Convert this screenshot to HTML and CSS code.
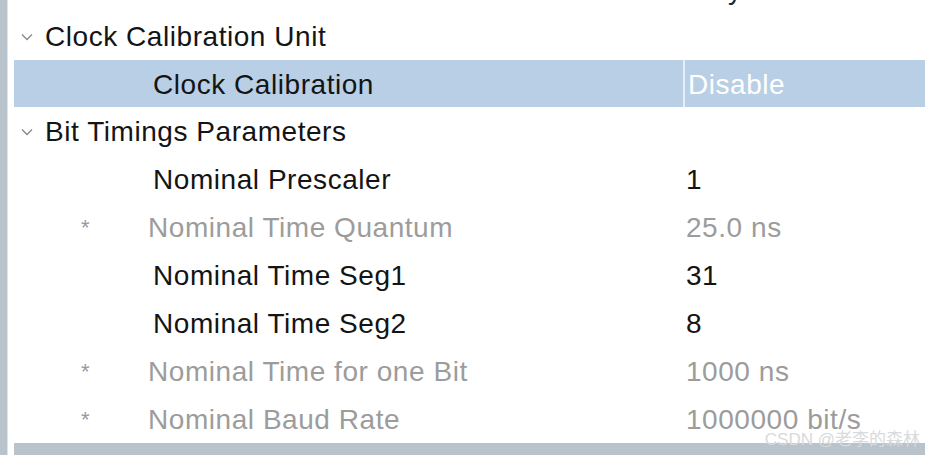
FILE: index.html
```html
<!DOCTYPE html>
<html>
<head>
<meta charset="utf-8">
<link rel="stylesheet" href="styles.css">
</head>
<body>
<div class="frame">
  <div class="sidebar"></div>
  <div class="panel">
    <div class="top-partial"><span class="ghost">y</span></div>
    <div class="row group"><span class="chev"><svg width="14" height="10" viewBox="0 0 14 10"><path d="M2 2.5 L7 7.5 L12 2.5" fill="none" stroke="#8a8a8a" stroke-width="1.4"/></svg></span><span class="gtitle">Clock Calibration Unit</span></div>
    <div class="row prop selected"><span class="star"></span><span class="label">Clock Calibration</span><span class="value">Disable</span></div>
    <div class="row group"><span class="chev"><svg width="14" height="10" viewBox="0 0 14 10"><path d="M2 2.5 L7 7.5 L12 2.5" fill="none" stroke="#8a8a8a" stroke-width="1.4"/></svg></span><span class="gtitle">Bit Timings Parameters</span></div>
    <div class="row prop"><span class="star"></span><span class="label">Nominal Prescaler</span><span class="value">1</span></div>
    <div class="row prop ro"><span class="star">*</span><span class="label">Nominal Time Quantum</span><span class="value">25.0 ns</span></div>
    <div class="row prop"><span class="star"></span><span class="label">Nominal Time Seg1</span><span class="value">31</span></div>
    <div class="row prop"><span class="star"></span><span class="label">Nominal Time Seg2</span><span class="value">8</span></div>
    <div class="row prop ro"><span class="star">*</span><span class="label">Nominal Time for one Bit</span><span class="value">1000 ns</span></div>
    <div class="row prop ro"><span class="star">*</span><span class="label">Nominal Baud Rate</span><span class="value">1000000 bit/s</span></div>
    <div class="bottom-bar"></div>
  </div>
  <div class="watermark">CSDN @老李的森林</div>
</div>
</body>
</html>
```
FILE: styles.css
```css
* { box-sizing: border-box; }
html, body { margin: 0; padding: 0; background: #fff; }
body { width: 925px; height: 455px; overflow: hidden; font-family: "Liberation Sans", Arial, sans-serif; }
.frame { position: relative; display: flex; width: 925px; height: 455px; }
.sidebar { width: 8px; background: #b8c3cb; border-right: 1px solid #dfe4e8; flex: none; }
.panel { flex: 1; display: flex; flex-direction: column; padding-left: 6px; }
.top-partial { height: 12px; position: relative; overflow: hidden; }
.ghost { position: absolute; left: 714px; top: -26px; font-size: 28px; color: #222; }
.row { height: 48px; display: flex; align-items: center; padding-top: 2px; font-size: 28px; letter-spacing: 0.55px; flex: none; }
.group { color: #141414; }
.chev { width: 31px; padding-left: 6px; display: flex; align-items: center; }
.gtitle { white-space: nowrap; }
.prop { color: #141414; }
.star { width: 134px; padding-left: 67px; color: #9a9a9a; font-size: 22px; }
.label { width: 535px; white-space: nowrap; padding-left: 5px; }
.ro .label { padding-left: 0; width: 535px; color: #9c9c9c; }
.ro .value { color: #9c9c9c; }
.value { padding-left: 3px; white-space: nowrap; }
.selected { background: #b9cfe6; height: 47px; padding-top: 0; }
.selected .label { padding-top: 2px; }
.selected .value { color: #fff; border-left: 2px solid #e6eef7; height: 47px; padding-top: 2px; display: flex; align-items: center; flex: 1; }
.bottom-bar { margin-top: auto; height: 12px; background: #b8c3cb; }
.watermark { position: absolute; right: 5px; bottom: 5px; font-size: 17px; letter-spacing: 0; color: #d8dadc; font-family: "Liberation Sans", "Noto Sans CJK SC", sans-serif; }
```
